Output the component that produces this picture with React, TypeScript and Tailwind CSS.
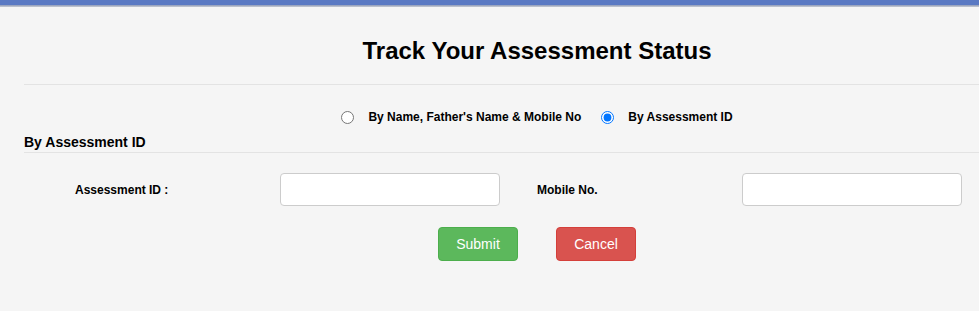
import { useState } from "react";

export default function App() {
  const [mode, setMode] = useState("id");

  return (
    <div className="w-[979px] h-[311px] overflow-hidden bg-[#f5f5f5] font-['Liberation_Sans',Arial,sans-serif] text-black">
      <div className="h-[5px] bg-[#5a79c3]" />
      <div className="h-[2px] bg-gradient-to-b from-[#8d99b8] to-[#c9ccd3]" />

      <div className="ml-[24px] w-[1026px]">
        <h1 className="mt-[31px] text-center text-[24px] leading-[26px] font-bold">
          Track Your Assessment Status
        </h1>
        <div className="mt-[20px] border-t border-[#e3e3e3]" />

        <div className="mt-[25px] flex items-center justify-center text-[12px] leading-[14px] font-bold">
          <label className="flex items-center">
            <input
              type="radio"
              name="mode"
              className="m-0 w-[13px] h-[13px]"
              checked={mode === "name"}
              onChange={() => setMode("name")}
            />
            <span className="ml-[14px]">By Name, Father's Name &amp; Mobile No</span>
          </label>
          <label className="ml-[20px] flex items-center">
            <input
              type="radio"
              name="mode"
              className="m-0 w-[13px] h-[13px]"
              checked={mode === "id"}
              onChange={() => setMode("id")}
            />
            <span className="ml-[14px]">By Assessment ID</span>
          </label>
        </div>

        <h2 className="mt-[10px] text-[14px] leading-[16px] font-bold">By Assessment ID</h2>
        <div className="mt-[2px] border-t border-[#e3e3e3]" />

        <div className="mt-[20px] flex items-center pl-[51px] text-[12px] font-bold">
          <div className="w-[205px]">Assessment ID :</div>
          <input
            type="text"
            className="w-[220px] h-[33px] bg-white border border-[#cccccc] rounded-[4px] px-3 outline-none"
          />
          <div className="ml-[37px] w-[205px]">Mobile No.</div>
          <input
            type="text"
            className="w-[220px] h-[33px] bg-white border border-[#cccccc] rounded-[4px] px-3 outline-none"
          />
        </div>

        <div className="mt-[21px] flex justify-center gap-[38px] text-[14px]">
          <button className="w-[80px] h-[34px] rounded-[4px] bg-[#5cb85c] border border-[#4cae4c] text-white">
            Submit
          </button>
          <button className="w-[80px] h-[34px] rounded-[4px] bg-[#d9534f] border border-[#d43f3a] text-white">
            Cancel
          </button>
        </div>
      </div>
    </div>
  );
}
